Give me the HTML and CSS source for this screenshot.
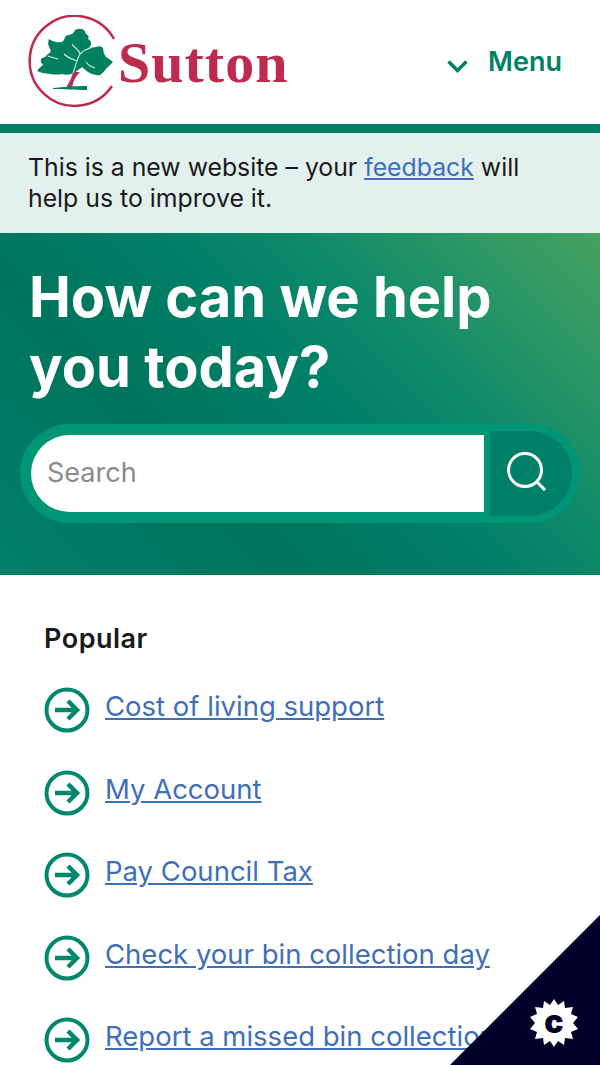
FILE: index.html
```html
<!DOCTYPE html>
<html lang="en">
<head>
    <meta charset="UTF-8">
    <title>London Borough of Sutton</title>
    <link rel="stylesheet" href="styles.css">
</head>
<body>

<header class="site-header">
    <a class="logo" href="#">
        <svg class="logo-mark" width="92" height="94" viewBox="0 0 92 94">
            <path d="M86 24 A45 45 0 1 0 84 71" fill="none" stroke="#bd2b4f" stroke-width="2.5"/>
            <path d="M38 73 C42 66 44 62 45 57 L52 57 C47 62 45 67 44 73 Z" fill="#bd2b4f"/>
            <path d="M25 73 C34 72 48 71 59 71 V75 C48 75 34 74 25 74 Z" fill="#00805f"/>
            <path d="M9 56 Q12 52 15 50 Q11 46 14 43 Q18 42 20 39 Q24 37 22 34 Q19 28 21 24 Q26 28 31 27 Q34 28 36 25 Q37 20 41 20 Q46 19 47 15 Q51 13 54 14 Q57 15 58 19 Q62 21 60 24 Q64 26 63 30 Q61 33 59 35 Q64 32 68 32 Q73 30 75 33 Q75 38 78 42 Q82 44 85 47 Q80 52 78 54 Q75 58 72 60 Q66 61 60 57 Q56 54 54 52 Q50 55 46 58 Q40 61 34 59 Q28 60 22 59 Q15 59 9 56 Z" fill="#00805f"/>
            <path d="M45 58 C48 50 49 44 52 39 C56 35 58 34 62 33 M49 46 C44 44 40 43 36 39 M52 39 C51 34 46 33 44 29 M58 47 C60 50 63 52 67 53 M30 44 C26 43 22 42 20 41" fill="none" stroke="#d5e8e2" stroke-width="1.1"/>
        </svg>
        <span class="logo-text">Sutton</span>
    </a>
    <button class="menu-btn">
        <svg class="chevron" width="21" height="13" viewBox="0 0 21 13"><path d="M1.5 1.5 L10.5 10.5 L19.5 1.5" fill="none" stroke="#008066" stroke-width="3.5"/></svg>
        <span>Menu</span>
    </button>
</header>

<div class="notice">
    This is a new website – your <a href="#">feedback</a> will help us to improve it.
</div>

<section class="hero">
    <h1>How can we help you today?</h1>
    <form class="search">
        <input type="text" placeholder="Search">
        <button type="button" class="search-btn" aria-label="Search">
            <svg class="search-icon" width="42" height="42" viewBox="0 0 42 42">
                <circle cx="19" cy="19" r="16.5" fill="none" stroke="#fff" stroke-width="3"/>
                <path d="M30 30 L39 39" fill="none" stroke="#fff" stroke-width="3"/>
            </svg>
        </button>
    </form>
</section>

<section class="popular">
    <h2>Popular</h2>
    <ul class="link-list">
        <li><svg class="arrow" viewBox="0 0 46 46"><circle cx="23" cy="23" r="20.5" fill="none" stroke="#00876c" stroke-width="4"/><path d="M11 23 H32 M24 14 L33 23 L24 32" fill="none" stroke="#00876c" stroke-width="4.5"/></svg><a href="#">Cost of living support</a></li>
        <li><svg class="arrow" viewBox="0 0 46 46"><circle cx="23" cy="23" r="20.5" fill="none" stroke="#00876c" stroke-width="4"/><path d="M11 23 H32 M24 14 L33 23 L24 32" fill="none" stroke="#00876c" stroke-width="4.5"/></svg><a href="#">My Account</a></li>
        <li><svg class="arrow" viewBox="0 0 46 46"><circle cx="23" cy="23" r="20.5" fill="none" stroke="#00876c" stroke-width="4"/><path d="M11 23 H32 M24 14 L33 23 L24 32" fill="none" stroke="#00876c" stroke-width="4.5"/></svg><a href="#">Pay Council Tax</a></li>
        <li><svg class="arrow" viewBox="0 0 46 46"><circle cx="23" cy="23" r="20.5" fill="none" stroke="#00876c" stroke-width="4"/><path d="M11 23 H32 M24 14 L33 23 L24 32" fill="none" stroke="#00876c" stroke-width="4.5"/></svg><a href="#">Check your bin collection day</a></li>
        <li><svg class="arrow" viewBox="0 0 46 46"><circle cx="23" cy="23" r="20.5" fill="none" stroke="#00876c" stroke-width="4"/><path d="M11 23 H32 M24 14 L33 23 L24 32" fill="none" stroke="#00876c" stroke-width="4.5"/></svg><a href="#">Report a missed bin collection</a></li>
    </ul>
</section>

<div class="cookie-corner">
    <svg class="cookie-badge" width="48" height="48" viewBox="0 0 48 48">
        <polygon fill="#fff" points="24,0 28,6 34,2 35,9 43,8 41,15 48,18 43,24 48,30 41,33 43,40 35,39 34,46 28,42 24,48 20,42 14,46 13,39 5,40 7,33 0,30 5,24 0,18 7,15 5,8 13,9 14,2 20,6"/>
        <text x="24" y="34" text-anchor="middle" class="cookie-c">c</text>
    </svg>
</div>

</body>
</html>
```

FILE: styles.css
```css
body {
    margin: 0;
    font-family: "Inter", "Lato", sans-serif;
    font-size: 26px;
    color: #1a1a1a;
    background-color: #fff;
    overflow: hidden;
}

a {
    color: #3f6fb8;
}

/* Header */
.site-header {
    height: 124px;
    box-sizing: border-box;
    display: flex;
    justify-content: space-between;
    align-items: flex-start;
    padding: 15px 38px 0 28px;
}

.logo {
    display: flex;
    align-items: flex-start;
    text-decoration: none;
}

.logo-mark {
    flex: none;
}

.logo-text {
    font-family: "Liberation Serif", serif;
    font-weight: bold;
    font-size: 58px;
    line-height: 60px;
    letter-spacing: 1px;
    color: #bd2b4f;
    margin: 18px 0 0 -2px;
}

.menu-btn {
    display: flex;
    align-items: center;
    gap: 20px;
    margin-top: 30px;
    padding: 0;
    border: 0;
    background: none;
    font-family: inherit;
    font-size: 27px;
    font-weight: 600;
    color: #008066;
}

.chevron {
    margin-top: 9px;
}

.notice {
    border-top: 9px solid #008066;
    background-color: #e3f1ee;
    padding: 19px 60px 0 28px;
    font-size: 24.8px;
    line-height: 31px;
    height: 109px;
    box-sizing: border-box;
}

/* Hero */
.hero {
    height: 342px;
    box-sizing: border-box;
    padding: 29px 20px 0;
    background: linear-gradient(225deg, #45a260 0%, #329a64 12%, #0f8a6a 32%, #008068 46%, #00745c 68%, #00806a 100%);
}

.hero h1 {
    margin: 0 50px 22px 9px;
    color: #fff;
    font-size: 56px;
    line-height: 70px;
    font-weight: 700;
}

.search {
    display: flex;
    align-items: center;
    height: 99px;
    box-sizing: border-box;
    padding: 0 8px 0 11px;
    background-color: #009675;
    border-radius: 50px;
}

.search input {
    flex: 1;
    min-width: 0;
    height: 77px;
    box-sizing: border-box;
    padding: 0 16px 2px;
    border: 0;
    border-radius: 39px 0 0 39px;
    font-family: inherit;
    font-size: 27px;
    background-color: #fff;
}

.search input::placeholder {
    color: #8a8a8a;
}

.search-btn {
    width: 82px;
    height: 85px;
    margin-left: 6px;
    padding: 0 8px 3px 0;
    border: 0;
    border-radius: 0 43px 43px 0;
    background-color: #008066;
    display: flex;
    align-items: center;
    justify-content: center;
}

/* Popular links */
.popular {
    padding: 47px 44px 0;
}

.popular h2 {
    margin: 0;
    font-size: 27px;
    line-height: 34px;
    letter-spacing: 0.5px;
    font-weight: 600;
}

.link-list {
    list-style: none;
    margin: 27px 0 0;
    padding: 0;
}

.link-list li {
    display: flex;
    align-items: flex-start;
    gap: 15px;
    height: 82.5px;
    font-size: 27.5px;
    line-height: 46px;
}

.arrow {
    flex: none;
    width: 46px;
    height: 46px;
    margin-top: 4px;
}

.link-list a {
    white-space: nowrap;
}

/* Cookie corner */
.cookie-corner {
    position: fixed;
    right: 0;
    bottom: 0;
    width: 150px;
    height: 150px;
    background-color: #000028;
    clip-path: polygon(100% 0, 100% 100%, 0 100%);
}

.cookie-badge {
    position: absolute;
    right: 22px;
    bottom: 18px;
}

.cookie-c {
    font-family: "Inter", sans-serif;
    font-weight: 900;
    font-size: 32px;
    fill: #000028;
}
```
